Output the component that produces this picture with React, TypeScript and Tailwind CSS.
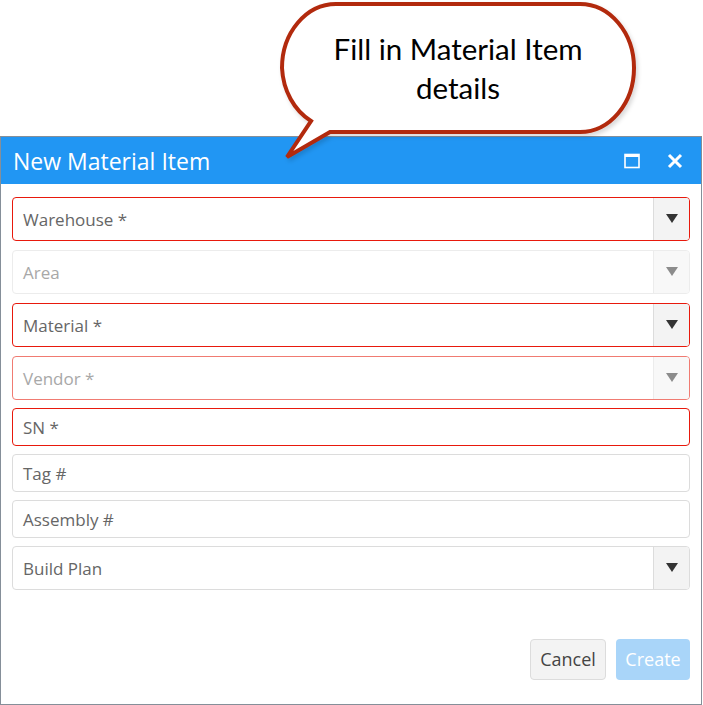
import { ReactNode } from 'react';

const font = { fontFamily: '"Open Sans", "Noto Sans", sans-serif' };

const Caret = ({ muted }: { muted?: boolean }) => (
  <svg width="12" height="10" viewBox="0 0 12 10">
    <path d="M0 0 H12 L6 9 Z" fill={muted ? '#8c8c8c' : '#333333'} />
  </svg>
);

type FieldProps = {
  label: string;
  select?: boolean;
  invalid?: boolean;
  disabled?: boolean;
};

const Field = ({ label, select, invalid, disabled }: FieldProps) => {
  // border colour depends on state
  let border = 'border-[#dcdcdc]';
  if (invalid && disabled) border = 'border-[#f07b72]';
  else if (invalid) border = 'border-[#e8190c]';
  else if (disabled) border = 'border-[#ececec]';

  return (
    <div
      className={`flex rounded-[4px] border ${border} ${select ? 'h-[44px]' : 'h-[38px]'} overflow-hidden bg-white`}
    >
      <div
        className={`flex flex-1 items-center pl-[10px] pt-[2px] text-[17px] ${disabled ? 'text-[#a8a8a8]' : 'text-[#666666]'}`}
      >
        {label}
      </div>
      {select && (
        <div
          className={`flex w-[36px] items-center justify-center border-l ${disabled ? 'border-[#ececec] bg-[#f8f8f8]' : 'border-[#dcdcdc] bg-[#f3f3f3]'}`}
        >
          <Caret muted={disabled} />
        </div>
      )}
    </div>
  );
};

const Bubble = ({ children }: { children: ReactNode }) => (
  <div className="absolute left-0 top-0 h-[170px] w-[703px]">
    <svg width="703" height="170" className="absolute left-0 top-0">
      <defs>
        <filter id="sh" x="-10%" y="-10%" width="120%" height="130%">
          <feDropShadow dx="2" dy="3" stdDeviation="2" floodColor="#000" floodOpacity="0.15" />
        </filter>
      </defs>
      <path
        d="M 336 4 H 580 A 54 64 0 0 1 634 68 A 54 64 0 0 1 580 132 H 330 L 287 157 L 311 121 A 54 64 0 0 1 282 68 A 54 64 0 0 1 336 4 Z"
        fill="#ffffff"
        stroke="#b2290f"
        strokeWidth="4"
        strokeLinejoin="miter"
        filter="url(#sh)"
      />
    </svg>
    <div
      className="absolute left-[282px] top-[29px] w-[352px] text-center text-[29.5px] leading-[39px] text-black"
      style={{ fontFamily: 'Lato, "Open Sans", sans-serif' }}
    >
      {children}
    </div>
  </div>
);

export default function App() {
  return (
    <div className="relative h-[705px] w-[703px] overflow-hidden bg-white" style={font}>
      <div className="pt-[136px]">
        <div className="flex h-[569px] w-[702px] flex-col border border-[#858f99] bg-white">
          {/* Title bar */}
          <div className="flex h-[47px] items-center bg-[#2196f3] pl-[12px] pr-[18px]">
            <span className="flex-1 pt-[2px] text-[23px] text-white">New Material Item</span>
            <svg width="16" height="16" viewBox="0 0 16 16" className="mr-[27px]">
              <rect x="1" y="1.5" width="14" height="13" fill="none" stroke="#fff" strokeWidth="1.6" />
              <rect x="1" y="1" width="14" height="3" fill="#fff" />
            </svg>
            <svg width="16" height="16" viewBox="0 0 16 16">
              <path d="M2 2 L14 14 M14 2 L2 14" stroke="#fff" strokeWidth="3" />
            </svg>
          </div>

          {/* Form fields */}
          <div className="flex flex-col px-[11px] pt-[13px]">
            <Field label="Warehouse *" select invalid />
            <div className="mt-[9px]">
              <Field label="Area" select disabled />
            </div>
            <div className="mt-[9px]">
              <Field label="Material *" select invalid />
            </div>
            <div className="mt-[9px]">
              <Field label="Vendor *" select invalid disabled />
            </div>
            <div className="mt-[8px]">
              <Field label="SN *" invalid />
            </div>
            <div className="mt-[8px]">
              <Field label="Tag #" />
            </div>
            <div className="mt-[8px]">
              <Field label="Assembly #" />
            </div>
            <div className="mt-[8px]">
              <Field label="Build Plan" select />
            </div>
          </div>

          {/* Actions */}
          <div className="mt-auto flex justify-end gap-[10px] px-[11px] pb-[24px]">
            <button className="h-[41px] w-[76px] rounded-[4px] border border-[#dcdcdc] bg-[#f3f3f3] text-[18px] text-[#444444]">
              Cancel
            </button>
            <button className="h-[41px] w-[74px] rounded-[4px] bg-[#a9d5f9] text-[18px] text-white">
              Create
            </button>
          </div>
        </div>
      </div>

      <Bubble>
        Fill in Material Item
        <br />
        details
      </Bubble>
    </div>
  );
}
